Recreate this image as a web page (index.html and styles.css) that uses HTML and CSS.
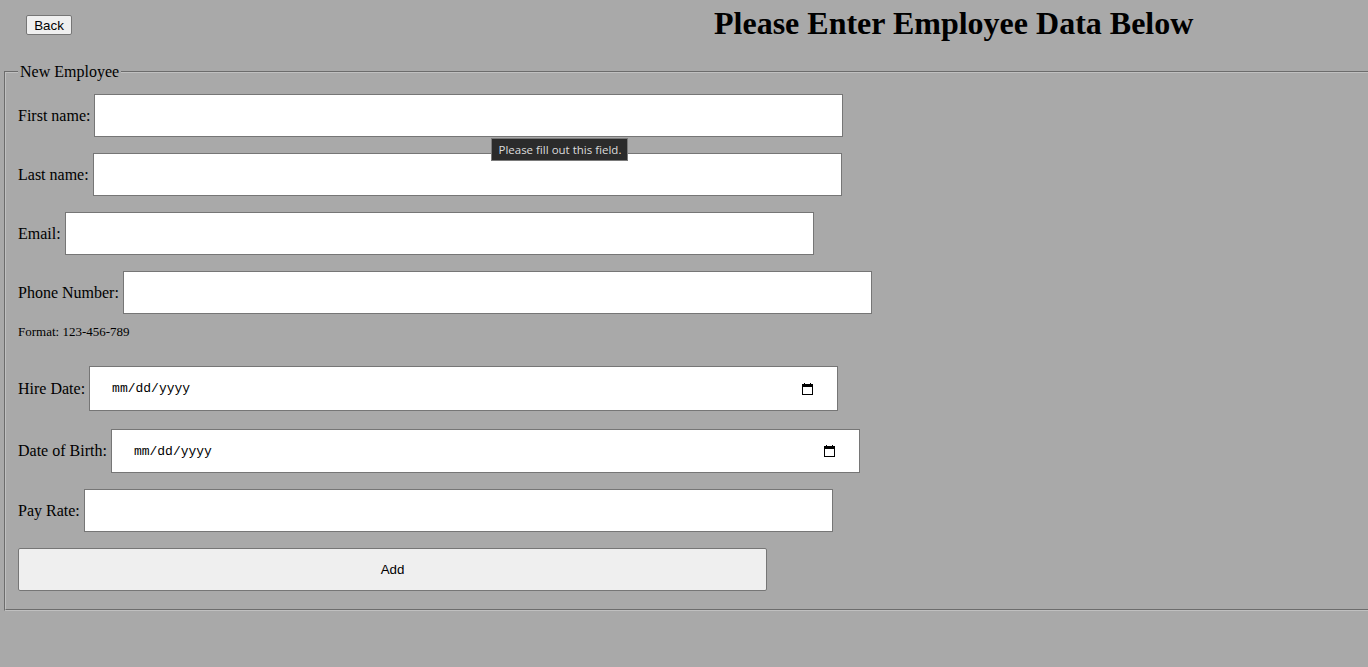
FILE: index.html
```html
<!DOCTYPE html>
<html>
<head>
<meta charset="utf-8">
<link rel="stylesheet" href="styles.css">
</head>
<body>
<header class="top">
  <button class="back">Back</button>
  <h1 class="title">Please Enter Employee Data Below</h1>
</header>
<form class="form">
  <fieldset class="box">
    <legend class="legend">New Employee</legend>
    <div class="row">
      <label class="lbl">First name:</label>
      <span class="field-wrap">
        <input class="txt" type="text">
        <span class="tip">Please fill out this field.</span>
      </span>
    </div>
    <div class="row"><label class="lbl">Last name:</label><input class="txt" type="text"></div>
    <div class="row"><label class="lbl">Email:</label><input class="txt" type="text"></div>
    <div class="row row-phone"><label class="lbl">Phone Number:</label><input class="txt" type="text"></div>
    <div class="hint">Format: 123-456-789</div>
    <div class="row row-date"><label class="lbl">Hire Date:</label><span class="date"><span class="ph">mm/dd/yyyy</span><svg class="cal" width="11" height="12" viewBox="0 0 11 12"><rect x="0.5" y="1.5" width="10" height="10" fill="none" stroke="#000"/><rect x="0" y="1" width="11" height="3" fill="#000"/><rect x="2" y="0" width="1" height="2" fill="#000"/><rect x="8" y="0" width="1" height="2" fill="#000"/></svg></span></div>
    <div class="row row-date2"><label class="lbl">Date of Birth:</label><span class="date"><span class="ph">mm/dd/yyyy</span><svg class="cal" width="11" height="12" viewBox="0 0 11 12"><rect x="0.5" y="1.5" width="10" height="10" fill="none" stroke="#000"/><rect x="0" y="1" width="11" height="3" fill="#000"/><rect x="2" y="0" width="1" height="2" fill="#000"/><rect x="8" y="0" width="1" height="2" fill="#000"/></svg></span></div>
    <div class="row row-pay"><label class="lbl">Pay Rate:</label><input class="txt" type="text"></div>
    <button class="add" type="button">Add</button>
  </fieldset>
</form>
</body>
</html>
```
FILE: styles.css
```css
html, body {
  margin: 0;
  padding: 0;
  background: #a9a9a9;
  font-family: "Liberation Serif", "Times New Roman", serif;
  font-size: 16px;
  color: #000;
  overflow: hidden;
}
.top {
  display: flex;
  align-items: flex-start;
  height: 63px;
}
.back {
  margin: 15px 0 0 26px;
  width: 46px;
  height: 20px;
  padding: 0;
  font-family: "Liberation Sans", Arial, sans-serif;
  font-size: 13.33px;
  background: #efefef;
  border: 1px solid #767676;
  border-radius: 2px;
  color: #000;
}
.title {
  margin: 5px 0 0 642px;
  font-size: 32px;
  font-weight: bold;
  line-height: 37px;
  white-space: nowrap;
}
.form {
  margin: 0;
}
.box {
  margin: 0 0 0 4px;
  width: 1400px;
  padding: 13px 12px 18px 12px;
  border: 2px groove #c0c0c0;
}
.legend {
  padding: 0 2px;
  font-size: 16px;
}
.row {
  display: flex;
  align-items: center;
  gap: 4px;
  margin-bottom: 16px;
}
.lbl {
  white-space: nowrap;
}
.field-wrap {
  position: relative;
  display: block;
}
.txt {
  box-sizing: border-box;
  width: 749px;
  height: 43px;
  margin: 0;
  background: #fff;
  border: 1px solid #767676;
  border-radius: 0;
  padding: 0 20px;
}
.tip {
  position: absolute;
  left: 397px;
  top: 44px;
  width: 137px;
  height: 23px;
  box-sizing: border-box;
  background: #2b2b2b;
  border: 1px solid #7a7a7a;
  color: #dcdcdc;
  font-family: "Open Sans", "Noto Sans", sans-serif;
  font-size: 11.5px;
  line-height: 21px;
  text-align: center;
  white-space: nowrap;
}
.row-phone {
  margin-bottom: 10px;
}
.hint {
  font-size: 13px;
  margin-bottom: 26px;
  line-height: 16px;
}
.date {
  box-sizing: border-box;
  width: 749px;
  height: 45px;
  background: #fff;
  border: 1px solid #767676;
  display: flex;
  align-items: center;
  justify-content: space-between;
  padding: 0 24px 0 22px;
  font-family: "Liberation Mono", "Courier New", monospace;
  font-size: 13px;
}
.row-date {
  margin-bottom: 18px;
}
.row-date2 {
  margin-bottom: 16px;
}
.row-date2 .date {
  height: 44px;
}
.ph {
  color: #000;
}
.cal {
  display: block;
}
.add {
  display: block;
  box-sizing: border-box;
  width: 749px;
  height: 43px;
  margin: 0;
  background: #efefef;
  border: 1px solid #767676;
  border-radius: 2px;
  font-family: "Liberation Sans", Arial, sans-serif;
  font-size: 13.33px;
  color: #000;
}
```
